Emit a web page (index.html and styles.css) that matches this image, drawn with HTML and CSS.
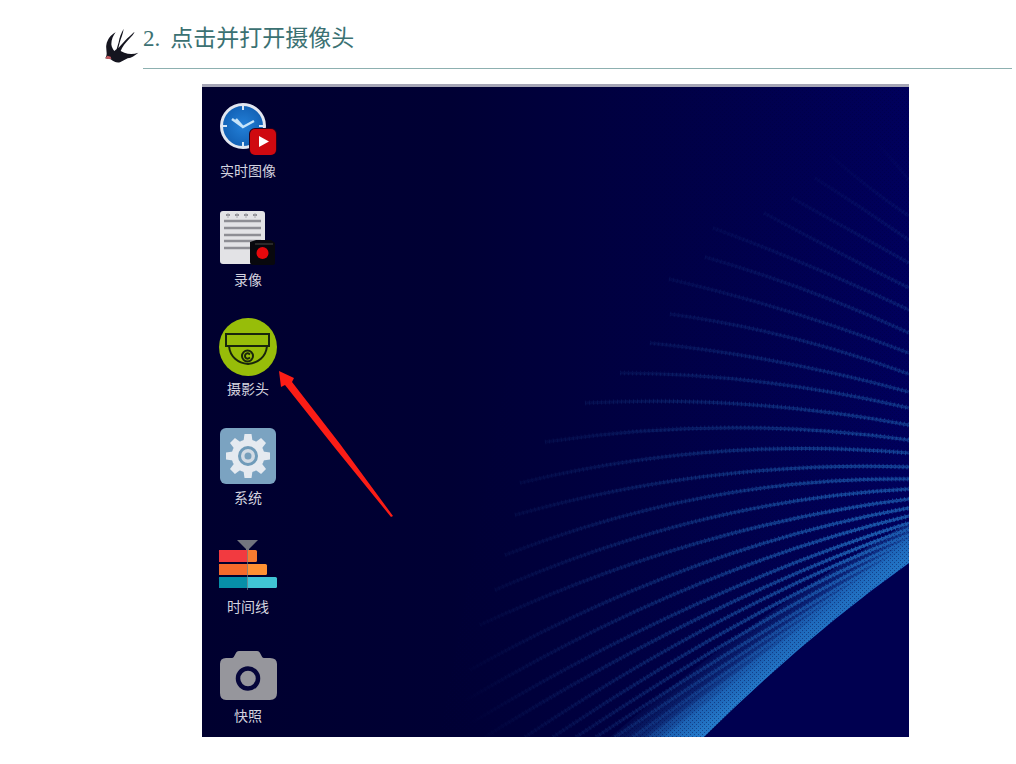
FILE: index.html
```html
<!DOCTYPE html>
<html lang="zh-CN">
<head>
<meta charset="utf-8">
<meta name="viewport" content="width=device-width, initial-scale=1">
<title>点击并打开摄像头</title>
<link rel="stylesheet" href="styles.css">
</head>
<body>
<header class="step">
  <svg class="bird" viewBox="45 40 102 105" aria-hidden="true">
    <path fill="#15151f" d="M77 53C63 60 52 74 49 91C47 103 52 113 49 124L46 131L62 134C70 141 79 145 90 143L113 131C125 129 134 123 145 114C131 119 116 119 103 114L92 109C96 97 107 83 118 72C125 65 130 60 134 51C122 61 104 77 85 101L89 84C93 69 99 58 101 42C94 56 88 67 86 83L80 103L73 109C68 103 65 97 64 89C64 74 70 62 77 53Z"/>
    <path fill="#c85c62" d="M46 131L52 123L62 126L64 132L56 133Z"/>
  </svg>
  <h1 class="step-title"><span>2.</span><span>点击并打开摄像头</span></h1>
</header>
<main class="desktop">
  <svg class="wallpaper" viewBox="202 84 707 653" preserveAspectRatio="xMaxYMax slice" aria-hidden="true">
    <defs>
      <linearGradient id="sky" x1="0" y1="0" x2="1" y2="0">
        <stop offset="0" stop-color="#00002f"/><stop offset=".35" stop-color="#000034"/>
        <stop offset=".65" stop-color="#000045"/><stop offset="1" stop-color="#00005c"/>
      </linearGradient>
      <radialGradient id="ray" gradientUnits="userSpaceOnUse" cx="900" cy="590" r="450">
        <stop offset="0" stop-color="#2478cc"/><stop offset=".2" stop-color="#1a58ac" stop-opacity=".75"/>
        <stop offset=".5" stop-color="#164a98" stop-opacity=".42"/><stop offset=".75" stop-color="#16408a" stop-opacity=".2"/>
        <stop offset="1" stop-color="#16408a" stop-opacity="0"/>
      </radialGradient>
      <linearGradient id="glow" gradientUnits="userSpaceOnUse" x1="815" y1="640" x2="779" y2="595">
        <stop offset="0" stop-color="#2478c8"/><stop offset=".3" stop-color="#1f6cbe" stop-opacity=".9"/>
        <stop offset=".6" stop-color="#1a55a8" stop-opacity=".4"/><stop offset="1" stop-color="#1a50a0" stop-opacity="0"/>
      </linearGradient>
      <pattern id="grain" width="4" height="4" patternUnits="userSpaceOnUse">
        <path fill="#00003c" fill-opacity=".4" d="M0 0h1v1h-1zM2 2h1v1h-1z"/>
      </pattern>
    </defs>
    <rect x="202" y="84" width="707" height="653" fill="url(#sky)"/>
    <g id="rays" fill="none" stroke="url(#ray)"></g>
    <path fill="url(#glow)" d="M610 737Q760 610 909 522V563Q805 637 704 737Z"/>
    <path fill="url(#grain)" d="M560 84H909V737H440Z"/>
    <path fill="#000050" d="M909 564Q805 638 705 737H909Z"/>
  </svg>
  <nav class="apps" aria-label="桌面">
    <button class="app" type="button">
      <svg class="icon" viewBox="0 0 60 60" aria-hidden="true">
        <defs><radialGradient id="dial"><stop offset="0" stop-color="#2380d8"/><stop offset="1" stop-color="#1260b4"/></radialGradient></defs>
        <circle cx="25" cy="26" r="21.500" fill="url(#dial)" stroke="#e2e6f0" stroke-width="3"/>
        <path stroke="#d6e6f6" stroke-width="2" d="M25 6v4M25 42v4M5 26h4M41 26h4"/>
        <path fill="none" stroke="#c6e4fa" stroke-width="2.500" d="M14 19L25 27M18 19L25 27L36 21"/>
        <rect x="31" y="28" width="28" height="27" rx="6" fill="#2a0018"/>
        <rect x="32" y="29" width="26" height="26" rx="5" fill="#cf0910"/>
        <path fill="#fff" d="M41 36L51 41.500L41 47Z"/>
      </svg>
      <span>实时图像</span>
    </button>
    <button class="app" type="button">
      <svg class="icon" viewBox="0 0 60 60" aria-hidden="true">
        <rect x="2" y="2" width="45" height="53" rx="3" fill="#e3e3e6"/>
        <path stroke="#909096" stroke-width="2" stroke-dasharray="4 5" d="M8 6h34"/>
        <path stroke="#aaaab0" d="M10 4v5M19 4v5M28 4v5M37 4v5"/>
        <path stroke="#8e8e94" stroke-width="2.500" d="M6 12h37M6 19h37M6 26h37M6 32h37M6 39h26"/>
        <path fill="#08080d" d="M32 33L38 31H53L57 34V54Q57 56 54 56H35Q32 56 32 53Z"/>
        <path stroke="#292929" stroke-width="2" d="M37 35h18"/>
        <circle cx="44.500" cy="44" r="6" fill="#e5080c"/>
      </svg>
      <span>录像</span>
    </button>
    <button class="app" type="button">
      <svg class="icon" viewBox="0 0 60 60" aria-hidden="true">
        <circle cx="30" cy="29" r="29" fill="#97bd09"/>
        <g fill="none" stroke="#18250c" stroke-width="2">
          <path d="M8 16H51V28H8ZM11 28C12 39 20 45 30 46C40 45 48 39 49 28"/>
          <circle cx="29.500" cy="38" r="5.500"/>
          <path d="M32 36.500C29 34 27 36 27 38S29 42 32 39.500"/>
        </g>
      </svg>
      <span>摄影头</span>
    </button>
    <button class="app" type="button">
      <svg class="icon" viewBox="0 0 60 60" aria-hidden="true">
        <rect x="2" y="1" width="56" height="56" rx="6" fill="#7ba3c1"/>
        <g fill="#e5eaf0">
          <circle cx="30" cy="29" r="16.500"/>
          <path id="tooth" d="M25.500 14L26.500 7H33.500L34.500 14Z"/>
          <use href="#tooth" transform="rotate(45 30 29)"/><use href="#tooth" transform="rotate(90 30 29)"/>
          <use href="#tooth" transform="rotate(135 30 29)"/><use href="#tooth" transform="rotate(180 30 29)"/>
          <use href="#tooth" transform="rotate(225 30 29)"/><use href="#tooth" transform="rotate(270 30 29)"/>
          <use href="#tooth" transform="rotate(315 30 29)"/>
        </g>
        <circle cx="30" cy="29" r="8.500" fill="#d2dbe4" stroke="#6f9bb9" stroke-width="3"/>
        <circle cx="30" cy="29" r="3.500" fill="#779fbb"/>
      </svg>
      <span>系统</span>
    </button>
    <button class="app" type="button">
      <svg class="icon" viewBox="0 0 60 60" aria-hidden="true">
        <rect x="1" y="14" width="38" height="12" rx="1.500" fill="#f77b30"/><path fill="#f23a40" d="M1 14H29V26H1Z"/>
        <rect x="1" y="28" width="48" height="11" rx="1.500" fill="#ff9132"/><path fill="#f56a2b" d="M1 28H29V39H1Z"/>
        <rect x="1" y="41" width="58" height="11" rx="1.500" fill="#40c4d5"/><path fill="#078fa8" d="M1 41H29V52H1Z"/>
        <path fill="#72757e" d="M19 4H40L31 13V14H28V13Z"/><path stroke="#6e7780" stroke-opacity=".7" d="M29.500 13V54"/>
      </svg>
      <span>时间线</span>
    </button>
    <button class="app" type="button">
      <svg class="icon" viewBox="0 0 60 60" aria-hidden="true">
        <path fill="#96969c" d="M8 13H14C17 13 17 6 21 6H39C43 6 43 13 46 13H52Q59 13 59 19V48Q59 55 52 55H8Q2 55 2 48V19Q2 13 8 13Z"/>
        <circle cx="30" cy="33.500" r="10" fill="#96969c" stroke="#06063a" stroke-width="4.500"/>
      </svg>
      <span>快照</span>
    </button>
  </nav>
  <svg class="pointer" viewBox="0 0 117 147" aria-hidden="true">
    <path fill="#fb1d16" d="M2 0L17 7L15 11L63 73L116 145L114 146L58 77L8 14L4 16Z"/>
  </svg>
</main>
<script src="rays.js"></script>
</body>
</html>
```
FILE: styles.css
```css
* { box-sizing: border-box; }
body {
  margin: 0;
  padding: 25px 4px 27px 0;
  background: #fff;
  font-family: "Liberation Serif", "Noto Sans CJK SC", serif;
}
.step {
  display: flex;
  gap: 4px;
  padding-left: 105px;
}
.bird {
  width: 34px;
  height: 35px;
  margin-top: 3px;
}
.step-title {
  display: flex;
  flex: 1;
  gap: 10px;
  margin: 0;
  padding-bottom: 15px;
  border-bottom: 1px solid #8db0b0;
  color: #3b7172;
  font-size: 23px;
  font-weight: 400;
  line-height: 28px;
}
.desktop {
  position: relative;
  margin: 15px 103px 0 202px;
  padding: 13px 16px 12px;
  border-top: 3px solid #a6a6b6;
  background: #000034;
}
.wallpaper {
  position: absolute;
  inset: 0;
  width: 100%;
  height: 100%;
}
.apps {
  position: relative;
  display: flex;
  flex-direction: column;
  align-items: flex-start;
  gap: 29px;
}
.app {
  display: flex;
  flex-direction: column;
  align-items: center;
  width: 60px;
  padding: 0;
  border: 0;
  background: none;
  color: #d3d3df;
  font-family: "Noto Sans CJK SC", sans-serif;
  font-size: 14px;
  line-height: 20px;
  white-space: nowrap;
}
.icon {
  display: block;
  width: 60px;
  height: 60px;
}
.pointer {
  position: absolute;
  top: 284px;
  left: 75px;
  width: 117px;
  height: 147px;
}
```
FILE: rays.js
```js
// Each ray: start x, start y, through x, through y, end y (all end at the right edge).
const RIGHT = 909;
const rays = [
  [862, 128, 888, 155, 180], [830, 155, 866, 185, 216], [815, 178, 866, 211, 240],
  [792, 198, 846, 228, 263], [764, 213, 834, 250, 288], [713, 228, 800, 262, 310],
  [705, 257, 800, 288, 333], [669, 279, 800, 315, 353], [670, 314, 800, 340, 374],
  [650, 343, 800, 366, 392], [620, 373, 800, 387, 408], [585, 403, 800, 409, 425],
  [545, 442, 762, 428, 440], [520, 483, 701, 453, 453], [515, 515, 701, 477, 467],
  [505, 555, 701, 498, 479], [495, 590, 701, 520, 489], [480, 625, 701, 542, 499],
  [470, 670, 701, 564, 508], [450, 710, 701, 583, 516], [450, 736, 701, 602, 523],
  [485, 737, 701, 617, 529], [525, 737, 701, 631, 535], [553, 737, 701, 645, 540],
  [576, 737, 701, 658, 544], [596, 737, 701, 670, 548], [615, 737, 715, 671, 551],
  [633, 737, 730, 670, 554], [650, 737, 745, 669, 557], [667, 737, 760, 666, 559]
];
const group = document.getElementById("rays");
for (const [x0, y0, xm, ym, y2] of rays) {
  const t = (xm - x0) / (RIGHT - x0);
  const cx = (x0 + RIGHT) / 2;
  const cy = (ym - (1 - t) ** 2 * y0 - t * t * y2) / (2 * t * (1 - t));
  const d = `M${x0} ${y0}Q${cx} ${cy} ${RIGHT} ${y2}`;
  for (const [width, dash] of [[3, "none"], [5, "1 3"]]) {
    const path = document.createElementNS("http://www.w3.org/2000/svg", "path");
    path.setAttribute("d", d);
    path.setAttribute("stroke-width", width);
    path.setAttribute("stroke-dasharray", dash);
    group.append(path);
  }
}
```
